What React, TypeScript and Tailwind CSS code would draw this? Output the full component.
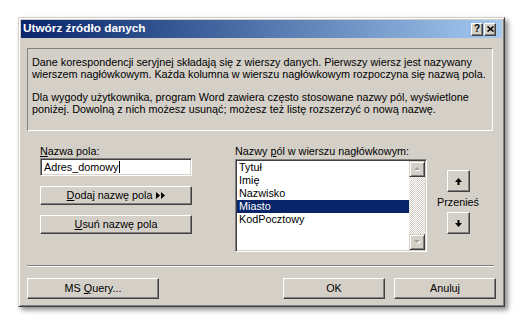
import type { ReactNode } from 'react';
import clsx from 'clsx';

const raised =
  'bg-[#d4d0c8] border border-t-white border-l-white border-r-[#404040] border-b-[#404040] shadow-[inset_-1px_-1px_0_#808080]';
const sunken =
  'bg-white border border-t-[#808080] border-l-[#808080] border-r-white border-b-white shadow-[inset_1px_1px_0_#404040,inset_-1px_-1px_0_#d4d0c8]';

function Button({ className, children }: { className?: string; children: ReactNode }) {
  return (
    <button type="button" className={clsx('flex items-center justify-center text-black', raised, className)}>
      {children}
    </button>
  );
}

function ScrollArrow({ down }: { down?: boolean }) {
  return (
    <div
      className="w-[16px] h-[16px] flex items-center justify-center bg-[#d4d0c8] border border-t-[#d4d0c8] border-l-[#d4d0c8] border-r-[#404040] border-b-[#404040] shadow-[inset_1px_1px_0_#fff,inset_-1px_-1px_0_#808080]"
    >
      <svg width="9" height="6" viewBox="0 0 9 6">
        {down ? (
          <>
            <path d="M2 2 L8 2 L5 5 Z" fill="#fff" />
            <path d="M1 1 L7 1 L4 4 Z" fill="#a0a0a0" />
          </>
        ) : (
          <>
            <path d="M2 5 L8 5 L5 2 Z" fill="#fff" />
            <path d="M1 4 L7 4 L4 1 Z" fill="#a0a0a0" />
          </>
        )}
      </svg>
    </div>
  );
}

function MoveArrow({ down }: { down?: boolean }) {
  return (
    <svg width="7" height="7" viewBox="0 0 7 7">
      {down ? (
        <path d="M2.5 0 H4.5 V3 H7 L3.5 7 L0 3 H2.5 Z" fill="#000" />
      ) : (
        <path d="M3.5 0 L7 4 H4.5 V7 H2.5 V4 H0 Z" fill="#000" />
      )}
    </svg>
  );
}

const fields = ['Tytuł', 'Imię', 'Nazwisko', 'Miasto', 'KodPocztowy'];

export default function App() {
  return (
    <div className="w-[524px] h-[326px] bg-white pt-[17px] pl-[18px] font-['Liberation_Sans',Arial,sans-serif] text-[10.8px] text-black">
      <div className="w-[487px] h-[290px] flex flex-col p-[2px] bg-[#d4d0c8] border border-t-[#d4d0c8] border-l-[#d4d0c8] border-r-[#404040] border-b-[#404040] shadow-[inset_1px_1px_0_#fff,inset_-1px_-1px_0_#808080,3px_3px_5px_rgba(0,0,0,0.45)]">
        {/* Title bar */}
        <div className="h-[18px] flex items-center pl-[2px] pr-[6px] bg-gradient-to-r from-[#0a246a] to-[#a6caf0]">
          <span className="text-white font-bold text-[11.8px] leading-none">Utwórz źródło danych</span>
          <div className="ml-auto flex gap-[1px]">
            <div className={clsx('w-[12px] h-[13px] flex items-center justify-center', raised)}>
              <span className="font-bold text-[10px] leading-none">?</span>
            </div>
            <div className={clsx('w-[12px] h-[13px] flex items-center justify-center', raised)}>
              <svg width="7" height="6" viewBox="0 0 7 6">
                <path d="M0.5 0.5 L6.5 5.5 M6.5 0.5 L0.5 5.5" stroke="#000" strokeWidth="1.6" />
              </svg>
            </div>
          </div>
        </div>

        <div className="flex flex-col px-[6px]">
          {/* Description */}
          <div className="mt-[10px] w-[466px] h-[83px] pt-[8px] pl-[4px] border border-t-[#808080] border-l-[#808080] border-r-white border-b-white leading-[11.5px] whitespace-nowrap">
            <p>
              Dane korespondencji seryjnej składają się z wierszy danych. Pierwszy wiersz jest nazywany
              <br />
              wierszem nagłówkowym. Każda kolumna w wierszu nagłówkowym rozpoczyna się nazwą pola.
            </p>
            <p className="mt-[12px]">
              Dla wygody użytkownika, program Word zawiera często stosowane nazwy pól, wyświetlone
              <br />
              poniżej. Dowolną z nich możesz usunąć; możesz też listę rozszerzyć o nową nazwę.
            </p>
          </div>

          {/* Fields */}
          <div className="flex mt-[14px] ml-[13px]">
            <div className="w-[152px] flex flex-col">
              <div className="h-[12px] leading-[12px]">
                <span className="underline">N</span>azwa pola:
              </div>
              <div className={clsx('mt-[1px] h-[18px] flex items-center pl-[3px]', sunken)}>
                Adres_domowy
                <span className="w-px h-[12px] bg-black ml-px" />
              </div>
              <Button className="mt-[10px] h-[19px] gap-[4px]">
                <span>
                  <span className="underline">D</span>odaj nazwę pola
                </span>
                <svg width="9" height="7" viewBox="0 0 9 7">
                  <path d="M0 0 L4 3.5 L0 7 Z M5 0 L9 3.5 L5 7 Z" fill="#000" />
                </svg>
              </Button>
              <Button className="mt-[10px] h-[19px]">
                <span>
                  <span className="underline">U</span>suń nazwę pola
                </span>
              </Button>
            </div>

            <div className="ml-[43px] w-[192px] flex flex-col">
              <div className="h-[12px] leading-[12px]">
                Nazwy <span className="underline">p</span>ól w wierszu nagłówkowym:
              </div>
              <div className={clsx('mt-[2px] h-[93px] p-px flex', sunken)}>
                <div className="flex-1 flex flex-col">
                  {fields.map((f) => (
                    <div
                      key={f}
                      className={clsx(
                        'h-[13px] leading-[13px] pl-[2px]',
                        f === 'Miasto' && 'bg-[#0a246a] text-white'
                      )}
                    >
                      {f}
                    </div>
                  ))}
                </div>
                <div className="w-[16px] flex flex-col">
                  <ScrollArrow />
                  <div className="flex-1 bg-[repeating-conic-gradient(#d4d0c8_0%_25%,#ffffff_0%_50%)] bg-[length:2px_2px]" />
                  <ScrollArrow down />
                </div>
              </div>
            </div>

            <div className="ml-[11px] w-[40px] flex flex-col items-center pt-[25px]">
              <Button className="w-[23px] h-[22px]">
                <MoveArrow />
              </Button>
              <div className="mt-[4px] h-[12px] leading-[12px]">Przenieś</div>
              <Button className="mt-[4px] w-[23px] h-[22px]">
                <MoveArrow down />
              </Button>
            </div>
          </div>

          {/* Separator */}
          <div className="mt-[13px] w-[467px] border-t border-t-[#808080] border-b border-b-white" />

          {/* Buttons */}
          <div className="mt-[11px] flex">
            <Button className="w-[132px] h-[21px]">
              <span>
                MS <span className="underline">Q</span>uery...
              </span>
            </Button>
            <Button className="ml-auto w-[102px] h-[21px]">OK</Button>
            <Button className="ml-[9px] w-[102px] h-[21px]">Anuluj</Button>
          </div>
        </div>
      </div>
    </div>
  );
}
